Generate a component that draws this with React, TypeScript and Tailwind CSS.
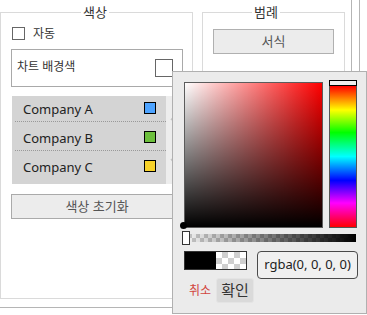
import React from "react";

const companies = [
  { name: "Company A", swatch: "bg-[#4da3ff]", row: "h-[25px] pt-[2px]" },
  { name: "Company B", swatch: "bg-[#6cbf3c]", row: "h-[28px] pt-[5px]" },
  { name: "Company C", swatch: "bg-[#f7d22a]", row: "h-[28px] pt-[5px]" },
];

const font = "font-['Noto_Sans','Noto_Sans_CJK_KR',sans-serif]";

function Chevron({ up }: { up?: boolean }) {
  return (
    <svg width="8" height="6" viewBox="0 0 8 6" className="text-[#c4c4c4]">
      <path d={up ? "M1 5 L4 1.5 L7 5" : "M1 1 L4 4.5 L7 1"} fill="none" stroke="currentColor" strokeWidth="1.5" />
    </svg>
  );
}

function ColorPopup() {
  return (
    <div className="absolute left-[172px] top-[71px] h-[243px] w-[195px] border border-[#b0b0b0] bg-[#ebebeb]">
      <div className="relative ml-[11px] mt-[8px] flex gap-[6px]">
        {/* saturation / value */}
        <div className="mt-[2px] h-[146px] w-[139px] border border-[#5c5c5c] bg-[linear-gradient(to_top,#000,transparent),linear-gradient(to_right,#fff,transparent)] bg-[#ff0000]" />
        <div className="absolute left-[-4px] top-[142px] h-[7px] w-[7px] rounded-full bg-black" />
        {/* hue */}
        <div className="relative flex flex-col">
          <div className="h-[6px] w-[28px] border border-black bg-[#eeeeee]" />
          <div className="h-[142px] w-[28px] border-x border-b border-[#555] bg-[linear-gradient(to_bottom,#f00_0%,#ff0_17%,#0f0_33%,#0ff_50%,#00f_67%,#f0f_83%,#f00_100%)]" />
        </div>
      </div>

      {/* alpha */}
      <div className="relative ml-[11px] mt-[6px] h-[8px] w-[172px] bg-[linear-gradient(to_right,rgba(0,0,0,0),#000),conic-gradient(#c8c8c8_25%,#f4f4f4_0_50%,#c8c8c8_0_75%,#f4f4f4_0)] bg-[length:100%_100%,8px_8px]">
        <div className="absolute left-[-2px] top-[-3px] h-[14px] w-[8px] border border-[#333] bg-white" />
      </div>

      <div className="ml-[11px] mt-[9px] flex items-start gap-[10px]">
        <div className="flex h-[19px] w-[63px] border border-[#333]">
          <div className="w-[31px] bg-black" />
          <div className="flex-1 bg-[conic-gradient(#cfcfcf_25%,#fff_0_50%,#cfcfcf_0_75%,#fff_0)] bg-[length:12px_12px]" />
        </div>
        <div className={`flex h-[28px] w-[101px] items-center justify-center rounded-[4px] border border-[#4a4a4a] bg-[#f0f0f0] text-[13px] text-[#222] ${font}`}>
          rgba(0, 0, 0, 0)
        </div>
      </div>

      <div className={`ml-[16px] mt-[-1px] flex items-center gap-[5px] ${font}`}>
        <span className="text-[12px] text-[#d2463f]">취소</span>
        <button className="h-[25px] w-[38px] rounded-[3px] border border-[#e4e4e4] bg-[#dadada] text-[15px] leading-none text-[#333]">
          확인
        </button>
      </div>
    </div>
  );
}

export default function App() {
  return (
    <div className={`relative h-[315px] w-[367px] overflow-hidden bg-white ${font}`}>
      <div className="flex h-[308px] w-[360px] border-b border-r border-[#b5b5b5]">
        <div className="flex h-full w-[352px] items-start border-r border-[#b5b5b5]">
          <fieldset className="h-[299px] w-[193px] border border-[#dadada] pl-[10px] pr-[9px]">
            <legend className="ml-[70px] px-[2px] text-[13px] leading-[24px] text-[#333]">색상</legend>

            <div className="ml-[1px] mt-[3px] flex h-[13px] items-center gap-[8px]">
              <div className="h-[13px] w-[13px] border border-[#666] bg-white" />
              <span className="text-[12px] text-[#333]">자동</span>
            </div>

            <div className="mt-[9px] flex h-[38px] items-center justify-between border border-[#a9a9a9] pl-[5px] pr-[9px]">
              <span className="mb-[3px] text-[12px] text-[#333]">차트 배경색</span>
              <div className="h-[18px] w-[18px] border border-[#666] bg-white" />
            </div>

            <div className="ml-[1px] mt-[9px] flex h-[88px] w-[170px]">
              <div className="flex-1 bg-[#d4d4d4]">
                {companies.map((c, i) => (
                  <div key={c.name}>
                    <div className={`flex items-center justify-between pl-[11px] pr-[10px] ${c.row}`}>
                      <span className="text-[13px] text-[#222]">{c.name}</span>
                      <span className={`mb-[3px] h-[12px] w-[12px] border border-black ${c.swatch}`} />
                    </div>
                    {i < companies.length - 1 && <div className="ml-[3px] border-b border-dotted border-[#999]" />}
                  </div>
                ))}
              </div>
              <div className="flex w-[16px] flex-col items-center justify-between bg-[#ededed] pb-[20px] pt-[19px]">
                <Chevron up />
                <Chevron />
              </div>
            </div>

            <button className="mt-[10px] h-[25px] w-[172px] border border-[#aaa] bg-[#ececec] text-[13px] text-[#555]">
              색상 초기화
            </button>
          </fieldset>

          <fieldset className="ml-[9px] h-[299px] w-[142px] border border-[#dadada] px-[10px]">
            <legend className="ml-[39px] px-[2px] text-[13px] leading-[24px] text-[#333]">범례</legend>
            <button className="mt-[5px] h-[25px] w-[121px] border border-[#b0b0b0] bg-[#ececec] text-[13px] text-[#555]">
              서식
            </button>
          </fieldset>
        </div>
      </div>

      <ColorPopup />
    </div>
  );
}
